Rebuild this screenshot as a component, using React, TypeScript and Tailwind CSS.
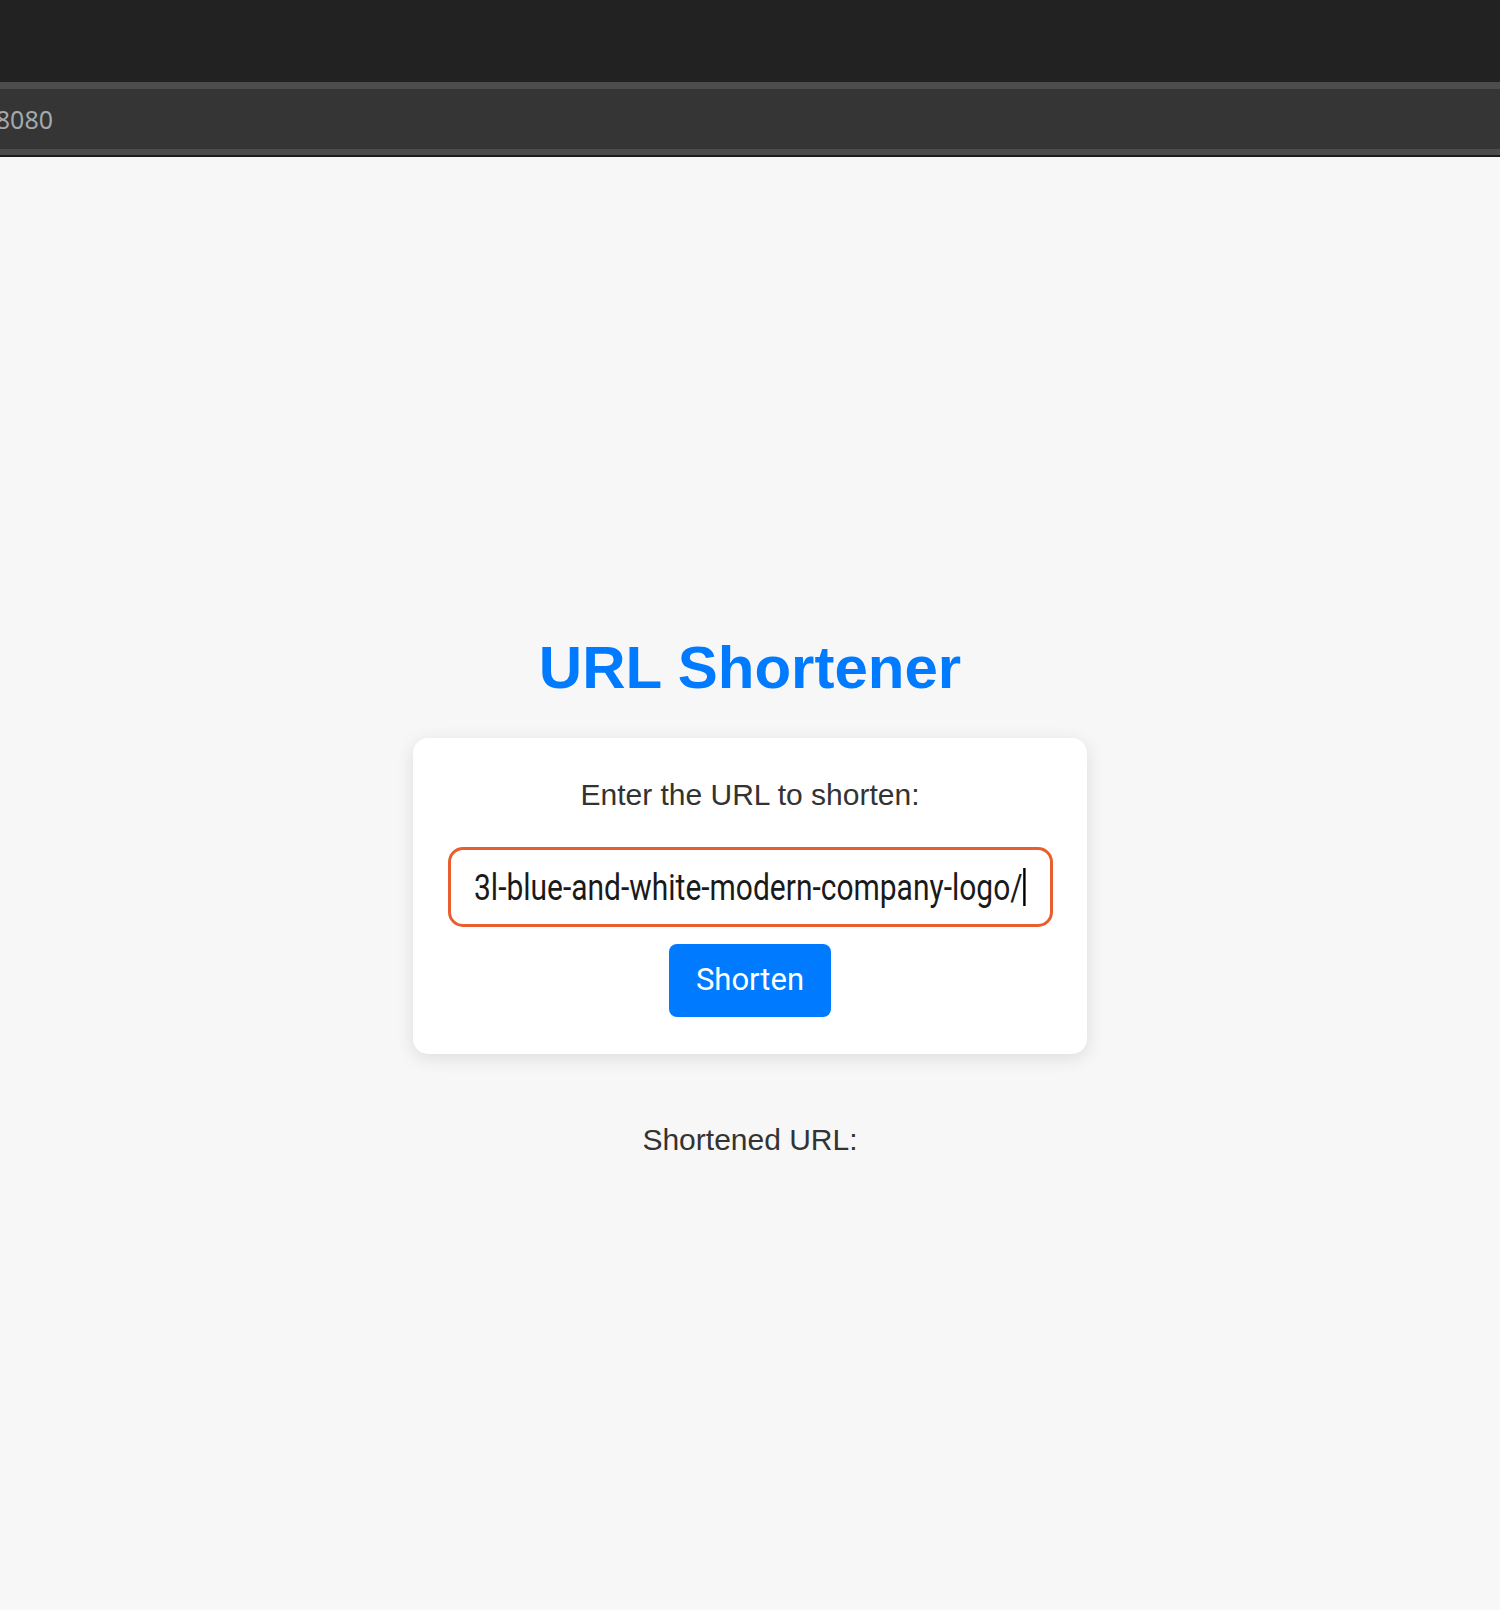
export default function App() {
  return (
    <div className="min-h-screen bg-[#f7f7f7] flex flex-col">
      {/* browser chrome */}
      <div className="h-[82px] bg-[#222222]" />
      <div className="h-[7px] bg-[#4c4c4c]" />
      <div className="h-[60px] bg-[#353535] flex items-center">
        <div className="w-[53px] overflow-hidden flex justify-end">
          <span className="whitespace-nowrap text-[25px] leading-none text-[#a3a9ae] font-['Noto_Sans',sans-serif]">
            localhost:8080
          </span>
        </div>
      </div>
      <div className="h-[6px] bg-[#4c4c4c]" />
      <div className="h-[2px] bg-[#1c1c1c]" />

      <main className="flex flex-col items-center pt-[477px] font-['Liberation_Sans',Arial,sans-serif]">
        <h1 className="text-[60px] leading-[68px] font-bold text-[#007bff]">URL Shortener</h1>

        <div className="mt-[36px] w-[674px] bg-white rounded-[15px] shadow-[0_4px_18px_rgba(0,0,0,0.11)] pt-[40px] pb-[37px] flex flex-col items-center">
          <label className="text-[30px] leading-[34px] text-[#333333]">Enter the URL to shorten:</label>

          <div className="mt-[35px] w-[605px] h-[80px] border-[3px] border-[#e95e2e] rounded-[15px] bg-white pl-[23px] flex items-center overflow-hidden">
            <span className="inline-flex items-center whitespace-nowrap origin-left scale-x-[0.81] text-[37px] leading-none text-[#1a1a1a] font-['Roboto',sans-serif]">
              3l-blue-and-white-modern-company-logo/
              <span className="inline-block w-[3px] h-[38px] bg-black ml-[1px]" />
            </span>
          </div>

          <button
            type="button"
            className="mt-[17px] w-[162px] h-[73px] rounded-[8px] bg-[#007bff] text-white text-[31px] font-['Roboto',sans-serif]"
          >
            Shorten
          </button>
        </div>

        <p className="mt-[69px] text-[30px] leading-[34px] text-[#333333]">Shortened URL:</p>
      </main>
    </div>
  );
}
